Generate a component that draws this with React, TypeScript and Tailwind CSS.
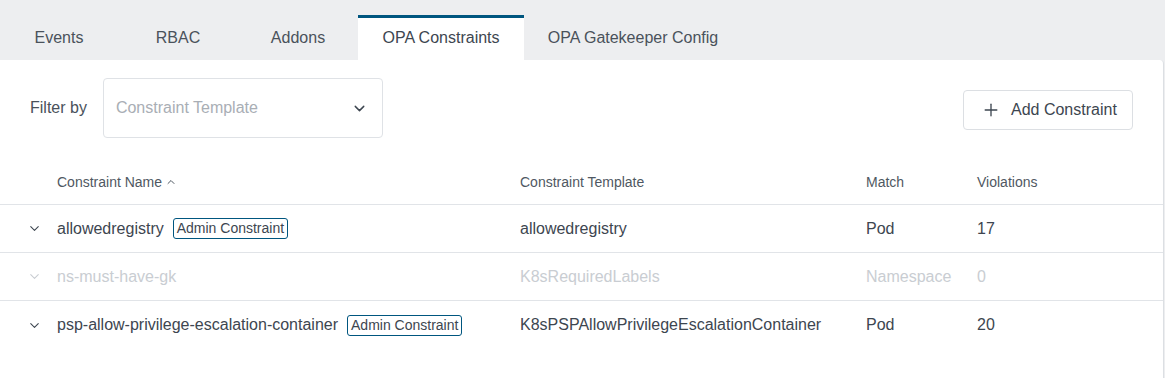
import React from 'react';
import { ChevronDown, ChevronUp, Plus } from 'lucide-react';

type Row = {
  name: string;
  template: string;
  match: string;
  violations: number;
  admin?: boolean;
  disabled?: boolean;
};

const rows: Row[] = [
  { name: 'allowedregistry', template: 'allowedregistry', match: 'Pod', violations: 17, admin: true },
  { name: 'ns-must-have-gk', template: 'K8sRequiredLabels', match: 'Namespace', violations: 0, disabled: true },
  {
    name: 'psp-allow-privilege-escalation-container',
    template: 'K8sPSPAllowPrivilegeEscalationContainer',
    match: 'Pod',
    violations: 20,
    admin: true,
  },
];

const tabs = [
  { label: 'Events', w: 'w-[118px]' },
  { label: 'RBAC', w: 'w-[120px]' },
  { label: 'Addons', w: 'w-[120px]' },
  { label: 'OPA Constraints', w: 'w-[166px]', active: true },
  { label: 'OPA Gatekeeper Config', w: 'w-[218px]' },
];

const cols = 'grid grid-cols-[57px_463px_346px_111px_1fr] items-center';

export default function App() {
  return (
    <div className="h-[378px] w-[1165px] overflow-hidden bg-[#edeef0] font-['Liberation_Sans',Arial,sans-serif] text-[#3d4650]">
      {/* tabs */}
      <div className="flex h-[60px] items-end">
        {tabs.map((t) => (
          <div
            key={t.label}
            className={`${t.w} flex h-[45px] items-center justify-center text-[16px] ${
              t.active ? 'border-t-[3px] border-[#00567f] bg-white pb-[3px] text-[#3d4650]' : 'text-[#4a525b]'
            }`}
          >
            {t.label}
          </div>
        ))}
      </div>

      {/* panel */}
      <div className="h-[318px] w-[1164px] rounded-tr-[4px] border-r border-[#dcdfe3] bg-white">
        <div className="flex items-center justify-between pl-[30px] pr-[30px] pt-[18px]">
          <div className="flex items-center">
            <span className="text-[16px] text-[#4a525b]">Filter by</span>
            <div className="ml-[16px] flex h-[60px] w-[280px] items-center justify-between rounded-[4px] border border-[#dfe2e6] pl-[12px] pr-[14px]">
              <span className="text-[16px] text-[#a9aeb5]">Constraint Template</span>
              <ChevronDown size={17} strokeWidth={2} className="text-[#3d4650]" />
            </div>
          </div>
          <button className="mt-[4px] flex h-[40px] w-[170px] items-center rounded-[4px] border border-[#dcdfe3] pl-[17px] text-[16px] text-[#3d4650]">
            <Plus size={20} strokeWidth={1.6} />
            <span className="ml-[10px]">Add Constraint</span>
          </button>
        </div>

        {/* table */}
        <div className="mt-[22px]">
          <div className={`${cols} h-[45px] border-b border-[#e1e4e8] text-[14px] text-[#4f5862]`}>
            <div />
            <div className="flex items-center">
              Constraint Name
              <ChevronUp size={12} strokeWidth={2} className="ml-[3px]" />
            </div>
            <div>Constraint Template</div>
            <div>Match</div>
            <div>Violations</div>
          </div>
          {rows.map((r, i) => (
            <div
              key={r.name}
              className={`${cols} h-[48px] text-[16px] ${i < rows.length - 1 ? 'border-b border-[#e1e4e8]' : ''} ${
                r.disabled ? 'text-[#c9cdd2]' : 'text-[#3d4650]'
              }`}
            >
              <div className="flex justify-center pl-[12px]">
                <ChevronDown size={15} strokeWidth={1.7} />
              </div>
              <div className="flex items-center">
                <span>{r.name}</span>
                {r.admin && (
                  <span className="ml-[9px] rounded-[3px] border border-[#00567f] px-[3px] py-[1px] text-[14px] leading-[17px] text-[#3d4650]">
                    Admin Constraint
                  </span>
                )}
              </div>
              <div>{r.template}</div>
              <div>{r.match}</div>
              <div>{r.violations}</div>
            </div>
          ))}
        </div>
      </div>
    </div>
  );
}
